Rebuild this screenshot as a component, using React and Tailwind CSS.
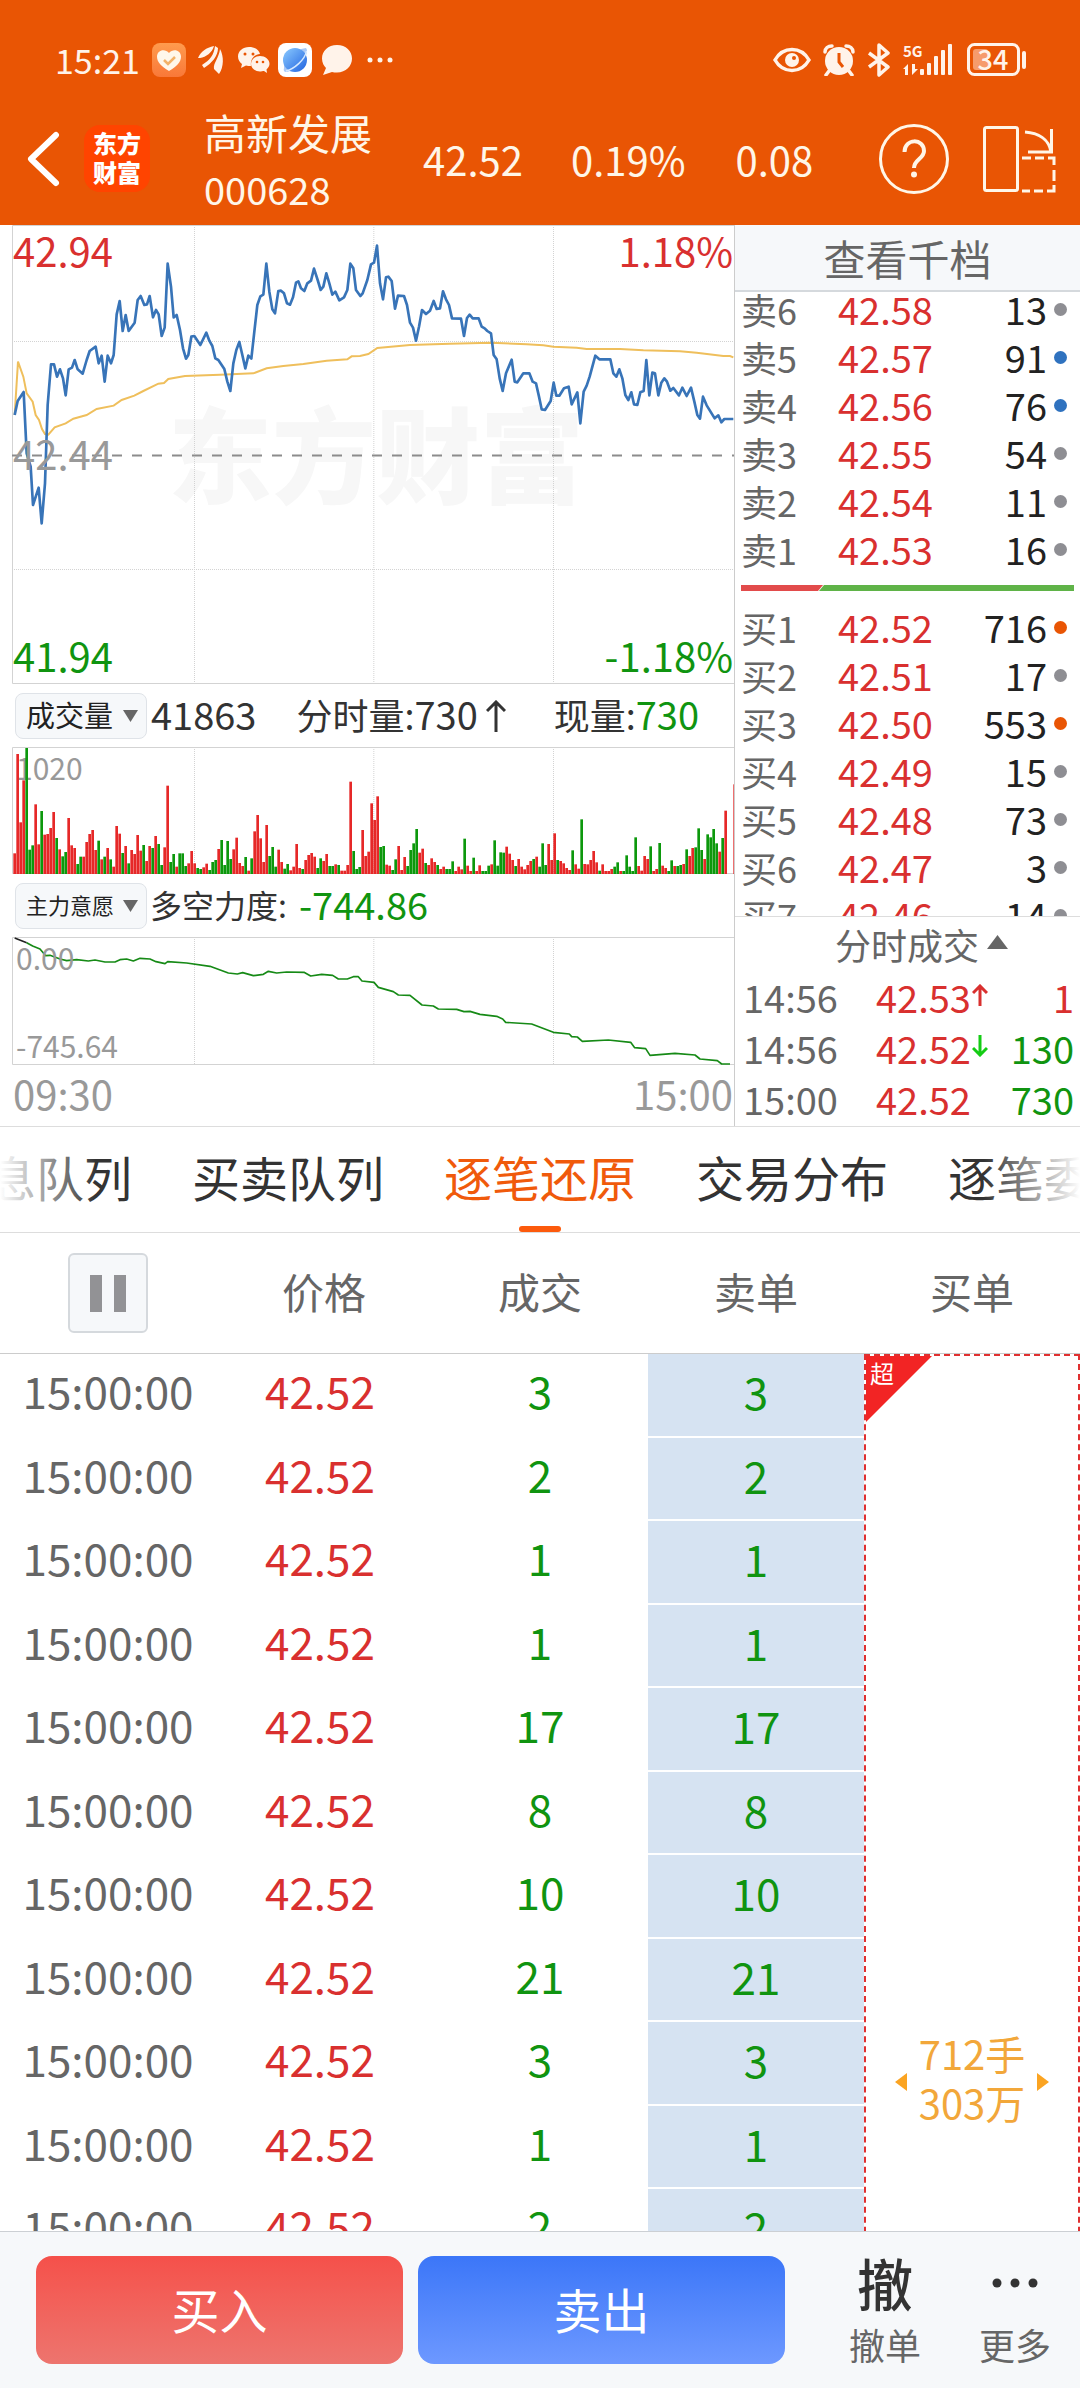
import React, { useState } from 'react'

const pricePoints =
    '44,585 53,543 71,516 80,700 92,740 99,855 116,803 125,910 135,790 143,555 153,433 162,433 171,470 180,448 189,475 197,526 206,448 216,443 224,420 233,448 248,461 260,420 269,393 287,380 296,430 305,407 314,485 323,407 333,430 341,405 350,283 359,243 368,333 377,285 386,333 404,308 413,240 422,228 433,255 441,253 449,228 459,292 468,270 476,283 485,348 494,323 503,131 513,200 521,292 530,285 540,330 549,385 558,416 565,405 574,350 583,348 601,375 619,338 628,362 637,378 646,415 655,420 673,447 682,485 691,513 700,430 709,390 718,366 727,405 736,445 745,407 754,416 763,335 772,255 781,229 790,224 799,131 808,215 817,268 825,280 835,213 843,212 852,220 861,250 870,254 879,232 888,188 895,184 903,205 913,213 922,190 933,182 942,146 953,180 962,210 970,200 979,160 988,190 997,224 1006,215 1018,241 1032,232 1042,210 1051,131 1060,145 1068,210 1081,228 1088,220 1102,180 1113,133 1122,128 1131,77 1140,190 1149,238 1158,172 1165,170 1175,183 1185,266 1194,227 1212,228 1221,255 1230,308 1239,323 1248,362 1257,320 1266,270 1278,282 1290,272 1301,243 1310,267 1320,265 1329,214 1338,238 1347,255 1356,295 1383,296 1392,348 1401,294 1409,284 1418,295 1436,295 1445,320 1454,325 1462,333 1473,340 1481,405 1490,418 1499,475 1508,513 1518,460 1535,419 1544,485 1552,487 1570,460 1588,460 1598,485 1608,490 1617,530 1625,568 1635,570 1652,543 1661,488 1669,527 1678,527 1692,505 1706,500 1715,553 1732,517 1741,610 1751,515 1760,497 1769,470 1786,407 1798,418 1831,418 1840,460 1849,470 1858,448 1867,475 1876,525 1885,540 1894,517 1902,553 1912,555 1921,517 1931,513 1939,420 1948,526 1957,458 1965,460 1975,526 1984,488 1993,475 2001,485 2011,512 2020,504 2037,526 2047,503 2060,528 2073,503 2083,545 2092,585 2100,596 2109,530 2120,556 2144,595 2155,586 2164,607 2173,597 2200,597'

const averagePoints =
    '44,585 54,425 70,470 80,520 98,545 107,585 117,600 126,627 135,642 145,644 164,622 197,610 220,596 260,585 290,567 341,557 365,540 403,527 430,513 475,491 492,489 505,477 555,468 660,464 760,460 800,445 850,438 910,432 980,422 1042,418 1055,409 1080,408 1105,402 1132,384 1230,375 1350,371 1473,368 1580,373 1630,376 1660,380 1730,383 1760,387 1860,387 1930,391 2040,394 2090,398 2170,408 2190,408 2200,412'

const forcePoints =
    '80,818 98,828 120,837 137,857 150,856 180,867 200,872 230,869 265,873 285,870 315,876 345,876 360,869 380,867 400,873 420,865 450,867 468,875 495,881 503,875 560,879 630,889 685,909 712,912 728,908 760,917 790,913 805,904 830,909 860,906 912,907 932,918 965,913 998,916 1015,927 1042,927 1060,920 1075,920 1086,933 1122,937 1135,952 1180,965 1195,975 1230,976 1266,1005 1300,1008 1315,1017 1370,1018 1392,1025 1410,1024 1440,1033 1490,1039 1508,1047 1517,1057 1595,1062 1660,1087 1708,1092 1715,1100 1732,1101 1747,1114 1825,1110 1892,1117 1904,1133 1937,1136 1950,1156 2025,1150 2085,1155 2100,1167 2152,1172 2165,1182 2190,1182'

// one bar a minute, r = up, g = down
const volumes =
    'r62 r360 r155 r281 g378 g73 g86 r209 r89 g189 r118 r120 r138 r186 g108 r74 g53 g66 r168 r86 r78 g30 g52 r52 r96 r120 r132 r72 g100 r44 g52 r78 g44 r22 r144 r121 g63 r84 g32 r72 r60 r117 r70 g87 r39 r84 g78 r114 g90 g27 r80 r265 g36 g60 r22 g62 g62 g24 r32 r69 r32 g18 g15 r20 r31 g12 g36 g42 r75 g102 g27 g99 g45 r74 r109 r33 r24 g51 r10 g47 r128 r177 r107 r36 r147 g54 g81 g22 r73 r36 g16 g30 r11 r22 r90 r18 g15 r42 r57 r63 r52 g18 g47 r39 r60 g24 g24 r29 g27 r10 r10 r27 r277 g69 g15 g21 r132 r54 r67 r212 r162 r233 g81 g84 r28 r25 g12 g44 r84 r12 r51 g24 g72 g92 g135 r64 r76 g33 r27 r47 r36 g27 r15 r22 g15 g15 g38 r9 r22 r14 g106 r25 r9 g49 r9 r26 g9 g9 g25 r29 g101 g25 g65 g64 r82 r61 r42 g24 r45 r22 r14 r27 r39 g45 r52 g22 g92 g27 r90 r42 r122 g42 r39 r32 r18 r12 g71 r29 r16 g164 r30 r29 r42 r69 r35 g10 r29 r9 r9 r15 g22 g35 r9 g9 g56 g22 g9 g110 r24 r10 r54 r45 g83 r9 r15 g93 r25 r18 g9 g41 r24 g24 g27 r30 g74 r54 r78 g80 g137 g72 r45 g119 g110 g135 g92 r67 g108 r190 r0 r0 r269'

const sells = [
    { name: '卖6', price: '42.58', qty: 13, dot: 'bg-[#8e8e93]' },
    { name: '卖5', price: '42.57', qty: 91, dot: 'bg-[#2f72bf]' },
    { name: '卖4', price: '42.56', qty: 76, dot: 'bg-[#2f72bf]' },
    { name: '卖3', price: '42.55', qty: 54, dot: 'bg-[#8e8e93]' },
    { name: '卖2', price: '42.54', qty: 11, dot: 'bg-[#8e8e93]' },
    { name: '卖1', price: '42.53', qty: 16, dot: 'bg-[#8e8e93]' },
]

const buys = [
    { name: '买1', price: '42.52', qty: 716, dot: 'bg-[#e95504]' },
    { name: '买2', price: '42.51', qty: 17, dot: 'bg-[#8e8e93]' },
    { name: '买3', price: '42.50', qty: 553, dot: 'bg-[#e95504]' },
    { name: '买4', price: '42.49', qty: 15, dot: 'bg-[#8e8e93]' },
    { name: '买5', price: '42.48', qty: 73, dot: 'bg-[#8e8e93]' },
    { name: '买6', price: '42.47', qty: 3, dot: 'bg-[#8e8e93]' },
    { name: '买7', price: '42.46', qty: 14, dot: 'bg-[#8e8e93]' },
]

const ticks = [
    { time: '14:56', price: '42.53', dir: 'up', qty: 1, color: 'text-[#d9302f]' },
    { time: '14:56', price: '42.52', dir: 'down', qty: 130, color: 'text-[#109410]' },
    { time: '15:00', price: '42.52', dir: '', qty: 730, color: 'text-[#109410]' },
]

const deals = [3, 2, 1, 1, 17, 8, 10, 21, 3, 1, 2]

const tabs = ['买卖队列', '逐笔还原', '交易分布']

function StatusBar() {
    return (
        <div className="flex items-center justify-between h-[120px] pl-[55px] pr-[52px] text-[#fff3ea]">
            <div className="flex items-center">
                <span className="text-[34px] leading-[40px] mr-3">15:21</span>
                <svg className="w-[34px] h-[34px] mr-3" viewBox="0 0 34 34">
                    <defs>
                        <linearGradient id="heart" x1="0" y1="0" x2="0" y2="1">
                            <stop offset="0" stopColor="#ff9b4e" />
                            <stop offset="1" stopColor="#f97838" />
                        </linearGradient>
                    </defs>
                    <rect width="34" height="34" rx="8" fill="url(#heart)" />
                    <path d="M17 28C9 23 5 19 5 13.500C5 7 13 5 17 10C21 5 29 7 29 13.500C29 19 25 23 17 28Z" fill="#fff7ea" />
                    <path d="M12 17l4 4 7-7" fill="none" stroke="#f3b268" strokeWidth="2.500" />
                </svg>
                <svg className="w-[26px] h-[30px] mr-[14px]" viewBox="0 0 26 30" fill="currentColor">
                    <path d="M0 13C3 6 8 3 16 1C14 8 8 12 2 13Z" />
                    <path d="M4 20C12 15 16 10 17 1L20 3C20 11 14 18 6 23Z" />
                    <path d="M16 24C15 18 21 13 22 4C26 11 26 22 21 29Z" />
                </svg>
                <svg className="w-[32px] h-[28px] mr-2" viewBox="0 0 32 28">
                    <path d="M11 1C5 1 0 5 0 10.500C0 14 2 16.500 4 18L3 22L8 19.500C9 20 12 20 13 20C12 13 17 8 22 8C21 4 17 1 11 1Z" fill="currentColor" />
                    <path d="M22 10C17 10 13 13.500 13 18C13 22 17 25.500 22 25.500C23 25.500 25 25 26 25L29 27L28.500 23.500C30 22 31.500 20 31.500 18C31.500 13.500 27 10 22 10Z" fill="currentColor" />
                    <g fill="#e95504">
                        <circle cx="7" cy="8" r="1.500" />
                        <circle cx="15" cy="8" r="1.500" />
                        <circle cx="19" cy="16" r="1.300" />
                        <circle cx="25" cy="16" r="1.300" />
                    </g>
                </svg>
                <svg className="w-[34px] h-[34px] mr-2" viewBox="0 0 34 34">
                    <defs>
                        <linearGradient id="globe" x1="0" y1="0" x2="1" y2="1">
                            <stop offset="0" stopColor="#8ccbff" />
                            <stop offset="1" stopColor="#1f62e0" />
                        </linearGradient>
                    </defs>
                    <rect width="34" height="34" rx="8" fill="#fff" />
                    <path d="M6 25C4 32 13 29 20 23C27 17 31 8 28 5L23 6L6 22Z" fill="#a9c9f7" />
                    <circle cx="17" cy="17" r="12" fill="url(#globe)" />
                    <path d="M8 28C16 26 27 17 28.500 8" fill="none" stroke="#d7eaff" strokeWidth="1.500" />
                </svg>
                <svg className="w-[34px] h-[32px] mr-[13px]" viewBox="0 0 34 32" fill="currentColor">
                    <path d="M17 1C8 1 2 7 2 14.500C2 19 4 22 6 24L3 31L12 28C13.500 28.500 15 28.500 17 28.500C26 28.500 32 22 32 14.500C32 7 26 1 17 1Z" />
                </svg>
                <svg className="w-[26px] h-2" viewBox="0 0 26 8" fill="currentColor">
                    <circle cx="3" cy="4" r="2.500" />
                    <circle cx="13" cy="4" r="2.500" />
                    <circle cx="23" cy="4" r="2.500" />
                </svg>
            </div>
            <div className="flex items-center gap-3">
                <svg className="w-[38px] h-[26px]" viewBox="0 0 38 26">
                    <path d="M2 13C10 -1 28 -1 36 13C28 27 10 27 2 13Z" fill="none" stroke="currentColor" strokeWidth="3.500" />
                    <circle cx="19" cy="13" r="7" fill="currentColor" />
                    <circle cx="21" cy="11" r="2" fill="#e95504" />
                </svg>
                <svg className="w-[32px] h-[32px]" viewBox="0 0 32 32">
                    <circle cx="16" cy="17" r="14" fill="currentColor" />
                    <path d="M2 8C2 4 5 2 9 2M23 2C27 2 30 4 30 8" fill="none" stroke="currentColor" strokeWidth="3.500" strokeLinecap="round" />
                    <path d="M6 27l-3 4M26 27l3 4" stroke="currentColor" strokeWidth="3.500" strokeLinecap="round" />
                    <path d="M16 9v9l4 5" fill="none" stroke="#e95504" strokeWidth="3" />
                </svg>
                <svg className="w-[24px] h-[34px]" viewBox="0 0 24 34" fill="none" stroke="currentColor" strokeWidth="3.500" strokeLinejoin="round">
                    <path d="M2 10L21 24L12 32V2L21 10L2 24" />
                </svg>
                <svg className="w-[52px] h-[34px]" viewBox="0 0 52 34" fill="currentColor">
                    <text x="0" y="14" fontSize="15" fontWeight="700">5G</text>
                    <path d="M0 26l5-5v11h-3v-6zM9 21v11l6-6h-3v-5z" />
                    <rect x="17" y="26" width="4" height="6" rx="1" />
                    <rect x="24" y="20" width="4" height="12" rx="1" />
                    <rect x="31" y="13" width="4" height="19" rx="1" />
                    <rect x="38" y="7" width="4" height="25" rx="1" />
                    <rect x="45" y="1" width="4" height="31" rx="1" />
                </svg>
                <svg className="w-[61px] h-[34px]" viewBox="0 0 61 34" fill="currentColor">
                    <rect x="1.500" y="1.500" width="50" height="30" rx="6" fill="none" stroke="currentColor" strokeWidth="3" />
                    <rect x="6" y="6" width="15" height="21" rx="3" fill="#f69b6c" />
                    <rect x="55" y="8" width="4" height="18" rx="2" />
                    <text x="26" y="27" fontSize="27" fontWeight="500" textAnchor="middle">34</text>
                </svg>
            </div>
        </div>
    )
}

function Header() {
    return (
        <header className="bg-[#e95504] text-[#fff6e8]">
            <StatusBar />
            <div className="flex items-center h-[105px] pl-[26px] pr-[24px] pb-[28px]">
                <button aria-label="返回">
                    <svg className="w-[34px] h-[56px]" viewBox="0 0 34 56" fill="none" stroke="#fff" strokeWidth="6" strokeLinejoin="round" strokeLinecap="round">
                        <path d="M30 4L5 28L30 52" />
                    </svg>
                </button>
                <div className="ml-6 flex h-[67px] w-[66px] flex-col items-center justify-center rounded-2xl bg-[#ff4400] pb-1 text-[24px] leading-[29px] font-black text-white">
                    <span>东方</span>
                    <span>财富</span>
                </div>
                <div className="ml-[54px] whitespace-nowrap">
                    <p className="text-[42px] leading-[60px]">高新发展</p>
                    <p className="text-[38px] leading-[54px]">000628</p>
                </div>
                <div className="ml-[51px] flex flex-1 text-[40px] leading-[60px]">
                    <span>42.52</span>
                    <span className="ml-[48px]">0.19%</span>
                    <span className="ml-[50px]">0.08</span>
                </div>
                <button aria-label="帮助" className="mr-[33px]">
                    <svg className="w-[70px] h-[70px]" viewBox="0 0 70 70" fill="none" stroke="currentColor">
                        <circle cx="35" cy="35" r="33.500" strokeWidth="3" />
                        <path d="M25.500 28C25.500 14 45 14 45 27C45 35 35 35 35 44" strokeWidth="4" />
                        <circle cx="35" cy="50.500" r="3" fill="currentColor" stroke="none" />
                    </svg>
                </button>
                <button aria-label="横屏">
                    <svg className="w-[74px] h-[68px]" viewBox="0 0 74 68" fill="none" stroke="currentColor" strokeWidth="3">
                        <rect x="2.500" y="2.500" width="33" height="63" rx="2" />
                        <path d="M43 7C56 8 67 14 69 27M69.500 4V27H46" />
                        <path d="M40 33h9M53 33h9M66 33h6v7M72 45v11M72 60v6h-7M61 66h-9M48 66h-8" />
                    </svg>
                </button>
            </div>
        </header>
    )
}

// y and height are in the chart's own units, three to a pixel
function Grid({ y, height }) {
    return (
        <g fill="none" stroke="#d3d3d3" strokeWidth="3">
            <path d={`M583.500 ${y}v${height}M1121.500 ${y}v${height}M1660.500 ${y}v${height}`} strokeDasharray="3 3" />
            <path d={`M2202 ${y + 1.5}H37.500V${y + height - 1.5}H2202`} />
        </g>
    )
}

function PriceChart() {
    return (
        <div className="relative text-[40px] leading-[50px]">
            <p className="absolute inset-y-0 left-[156px] flex items-center pb-2 text-[104px] font-black text-[#f7f7f7]">东方财富</p>
            <svg className="relative block w-full h-auto" viewBox="36 15 2166 1377" fill="none">
                <Grid y={15} height={1377} />
                <path d="M36 364.500H2202M36 1048.500H2202" stroke="#d3d3d3" strokeWidth="3" strokeDasharray="3 3" />
                <path d="M36 706.500H2202" stroke="#8c8c8c" strokeWidth="6" strokeDasharray="30 30" />
                <polyline points={averagePoints} stroke="#efbf5c" strokeWidth="6" />
                <polyline points={pricePoints} stroke="#3874b8" strokeWidth="8" strokeLinejoin="round" />
            </svg>
            <span className="absolute left-px top-0 text-[#d9302f]">42.94</span>
            <span className="absolute right-px top-0 text-[#d9302f]">1.18%</span>
            <span className="absolute left-px inset-y-0 flex items-center pb-1 text-[#999]">42.44</span>
            <span className="absolute left-px bottom-1 text-[#109410]">41.94</span>
            <span className="absolute right-px bottom-1 text-[#109410]">-1.18%</span>
        </div>
    )
}

function VolumeChart() {
    return (
        <div className="relative text-[30px] leading-[40px]">
            <span className="absolute left-1 top-0 text-[#999]">1020</span>
            <svg className="relative block w-full h-auto" viewBox="36 231 2166 381">
                <Grid y={231} height={381} />
                {volumes.split(' ').map((v, i) => {
                    const h = Number(v.slice(1))
                    return <rect key={i} x={40 + i * 9} y={612 - h} width="8" height={h} fill={v[0] === 'r' ? '#e62828' : '#0c980c'} />
                })}
            </svg>
        </div>
    )
}

function ForceChart() {
    return (
        <div className="relative text-[30px] leading-[40px] text-[#999]">
            <svg className="block w-full h-auto" viewBox="36 801 2166 384" fill="none">
                <Grid y={801} height={384} />
                <polyline points="44,804 80,818" stroke="#222" strokeWidth="5" />
                <polyline points={forcePoints} stroke="#168a16" strokeWidth="5" strokeLinejoin="round" />
            </svg>
            <span className="absolute left-1 top-0">0.00</span>
            <span className="absolute left-1 bottom-0">-745.64</span>
        </div>
    )
}

function Indicator({ label, options, className }) {
    return (
        <div className="relative ml-[3px] w-[132px]">
            <select aria-label={label} className={`block h-[46px] w-full appearance-none rounded-lg border border-[#dfe3e8] bg-[#f6f8fa] pb-1 pl-[10px] leading-[40px] text-[#222] ${className}`}>
                {options.map((o) => <option key={o}>{o}</option>)}
            </select>
            <svg className="pointer-events-none absolute right-[9px] top-[17px] w-[15px] h-3" viewBox="0 0 15 12" fill="#666">
                <path d="M0 0H15L7.500 12Z" />
            </svg>
        </div>
    )
}

function LeftPanel() {
    return (
        <div className="border-r border-[#ccc] pl-3">
            <PriceChart />
            <div className="flex items-center h-[63px] text-[38px] leading-[54px] text-[#333]">
                <Indicator label="副图指标一" options={['成交量']} className="text-[29px]" />
                <span className="ml-1 pb-1">41863</span>
                <span className="ml-[40px] pb-1"><span className="text-[36px]">分时量:</span>730</span>
                <svg className="ml-2 w-[20px] h-[32px]" viewBox="0 0 20 32" fill="none" stroke="currentColor" strokeWidth="3">
                    <path d="M10 32V2M1 11L10 2L19 11" />
                </svg>
                <span className="ml-[48px] pb-1"><span className="text-[36px]">现量:</span><span className="text-[#109410]">730</span></span>
            </div>
            <VolumeChart />
            <div className="flex items-center h-[63px] text-[38px] leading-[54px] text-[#333]">
                <Indicator label="副图指标二" options={['主力意愿']} className="text-[22px]" />
                <span className="ml-[3px] pb-1 text-[32px]">多空力度:</span>
                <span className="ml-3 pb-1 text-[#109410]">-744.86</span>
            </div>
            <ForceChart />
            <div className="flex justify-between h-[61px] pl-px pr-px text-[40px] leading-[56px] text-[#999]">
                <span>09:30</span>
                <span>15:00</span>
            </div>
        </div>
    )
}

function BookRow({ row }) {
    return (
        <li className="flex items-center h-12 pl-[6px] pr-[13px] text-[38px] leading-[48px]">
            <span className="w-[97px] text-[36px] text-[#666]">{row.name}</span>
            <span className="text-[#d9302f]">{row.price}</span>
            <span className="flex-1 text-right text-[#222]">{row.qty}</span>
            <i className={`ml-[7px] w-[13px] h-[13px] rounded-full ${row.dot}`}></i>
        </li>
    )
}

function Arrow({ dir }) {
    if (!dir) return null
    return (
        <svg className={dir === 'up' ? 'ml-px mb-1 w-4 h-[22px]' : 'ml-px mb-1 w-4 h-[22px] rotate-180'} viewBox="0 0 16 22" fill="none" stroke={dir === 'up' ? '#d9302f' : '#14cc14'} strokeWidth="3">
            <path d="M8 22V2M1 9L8 2L15 9" />
        </svg>
    )
}

function RightPanel() {
    return (
        <div className="flex flex-col min-h-0">
            <button className="h-[67px] shrink-0 border-b-2 border-[#d5d9dd] bg-[#f6f8fa] text-[42px] leading-[60px] text-[#666]">查看千档</button>
            <div className="h-0 grow overflow-hidden">
                <ul className="-mt-[7px]">
                    {sells.map((row) => <BookRow key={row.name} row={row} />)}
                </ul>
                <svg className="block w-full h-auto py-3 pl-[6px] pr-[6px]" viewBox="0 0 333 6">
                    <path d="M0 0H82L77 6H0Z" fill="#e24b4b" />
                    <path d="M83 0H333V6H78Z" fill="#5fb348" />
                </svg>
                <ul>
                    {buys.map((row) => <BookRow key={row.name} row={row} />)}
                </ul>
            </div>
            <div className="shrink-0 border-t border-[#ddd] pb-[2px]">
                <button className="flex h-[54px] w-full items-center justify-center pl-7 text-[36px] leading-[54px] text-[#666]">
                    分时成交
                    <svg className="ml-2 mb-1 w-[21px] h-[14px]" viewBox="0 0 21 14" fill="#666">
                        <path d="M10.500 0L21 14H0Z" />
                    </svg>
                </button>
                {ticks.map((t, i) => (
                    <div key={i} className="flex items-center h-[51px] pl-2 pr-[6px] text-[38px] leading-[51px]">
                        <span className="w-[133px] text-[#666]">{t.time}</span>
                        <span className="text-[#d9302f]">{t.price}</span>
                        <Arrow dir={t.dir} />
                        <span className={`flex-1 text-right ${t.color}`}>{t.qty}</span>
                    </div>
                ))}
            </div>
        </div>
    )
}

function Tabs() {
    const [active, setActive] = useState('逐笔还原')

    return (
        <nav className="relative flex justify-center gap-[60px] h-[106px] overflow-hidden border-b border-[#ddd] text-[48px] leading-[60px] text-[#333]">
            <button className="w-48 shrink-0 pb-2 text-right">息队列</button>
            {tabs.map((tab) => (
                <button
                    key={tab}
                    onClick={() => setActive(tab)}
                    className={tab === active ? 'relative w-48 shrink-0 pb-2 text-[#f05a0b]' : 'relative w-48 shrink-0 pb-2'}
                >
                    {tab}
                    {tab === active && <i className="absolute bottom-0 left-[75px] w-[42px] h-[6px] rounded-sm bg-[#fc5a0c]"></i>}
                </button>
            ))}
            <button className="w-48 shrink-0 pb-2 text-left">逐笔委</button>
            <div className="pointer-events-none absolute inset-y-0 left-0 w-24 bg-linear-to-r from-white to-transparent"></div>
            <div className="pointer-events-none absolute inset-y-0 right-0 w-24 bg-linear-to-l from-white to-transparent"></div>
        </nav>
    )
}

function DealTable() {
    return (
        <div className="flex-1 min-h-0 overflow-hidden">
            <table className="w-full table-fixed border-separate border-spacing-0 text-center text-[44px] leading-[60px]">
                <thead>
                    <tr className="h-[121px] text-[42px] text-[#666]">
                        <th className="border-b border-[#ccc] p-0">
                            <button aria-label="暂停" className="inline-flex w-[80px] h-[80px] items-center justify-center gap-3 rounded-md border-2 border-[#d5d9dd] bg-[#f6f8fa] align-middle">
                                <i className="w-3 h-[37px] bg-[#929295]"></i>
                                <i className="w-3 h-[37px] bg-[#929295]"></i>
                            </button>
                        </th>
                        <th className="border-b border-[#ccc] p-0 pb-1 font-normal">价格</th>
                        <th className="border-b border-[#ccc] p-0 pb-1 font-normal">成交</th>
                        <th className="border-b border-[#ccc] p-0 pb-1 font-normal">卖单</th>
                        <th className="border-b border-[#ccc] p-0 pb-1 font-normal">买单</th>
                    </tr>
                </thead>
                <tbody>
                    {deals.map((n, i) => (
                        <tr key={i} className="odd:h-[84px] even:h-[83px]">
                            <td className="p-0 pb-3 text-[#666]">15:00:00</td>
                            <td className="p-0 pb-3 pr-2 text-[#d9302f]">42.52</td>
                            <td className="p-0 pb-3 text-[#109410]">{n}</td>
                            <td className="border-b-2 border-white bg-[#d6e3f2] p-0 pb-2 text-[#109410]">{n}</td>
                            {i === 0 && (
                                <td rowSpan={deals.length} className="relative border-2 border-dashed border-[#e03030] p-0 pb-[144px] align-bottom text-[40px] leading-[49px] text-[#f2a73a]">
                                    <svg className="absolute left-0 top-0 w-[66px] h-[66px]" viewBox="0 0 66 66">
                                        <path d="M0 0H66L0 66Z" fill="#f22424" />
                                    </svg>
                                    <span className="absolute left-1 top-0 text-[24px] leading-[34px] text-white">超</span>
                                    <div className="flex items-center justify-center gap-3">
                                        <svg className="mt-2 w-3 h-[18px]" viewBox="0 0 12 18" fill="#fba422"><path d="M12 0V18L0 9Z" /></svg>
                                        <p>712手<br />303万</p>
                                        <svg className="mt-2 w-3 h-[18px]" viewBox="0 0 12 18" fill="#fba422"><path d="M0 0V18L12 9Z" /></svg>
                                    </div>
                                </td>
                            )}
                        </tr>
                    ))}
                </tbody>
            </table>
        </div>
    )
}

function BottomBar() {
    return (
        <footer className="flex shrink-0 items-start h-[157px] border-t border-[#ccd0d4] bg-[#f6f8fa] pt-6 pl-9 text-[48px] text-white">
            <button className="flex-1 h-[108px] rounded-2xl bg-linear-to-b from-[#f5504a] to-[#ed746e] pb-1">买入</button>
            <button className="ml-[15px] flex-1 h-[108px] rounded-2xl bg-linear-to-b from-[#3b76f8] to-[#6d98ff] pb-1">卖出</button>
            <button className="ml-[35px] flex w-[130px] flex-col items-center text-[#333]">
                <span className="text-[56px] leading-[52px] font-medium">撤</span>
                <span className="mt-4 text-[36px] leading-[40px] text-[#666]">撤单</span>
            </button>
            <button className="flex w-[130px] flex-col items-center text-[#333]">
                <svg className="w-[46px] h-[52px]" viewBox="0 0 46 52" fill="currentColor">
                    <circle cx="5" cy="27" r="4.500" />
                    <circle cx="23" cy="27" r="4.500" />
                    <circle cx="41" cy="27" r="4.500" />
                </svg>
                <span className="mt-4 text-[36px] leading-[40px] text-[#666]">更多</span>
            </button>
        </footer>
    )
}

export default function App() {
    return (
        <div className="flex h-screen flex-col overflow-hidden bg-white [font-family:'Noto_Sans_CJK_SC','Noto_Sans',sans-serif]">
            <Header />
            <section className="grid shrink-0 grid-cols-[735fr_345fr] border-b border-[#ddd]">
                <LeftPanel />
                <RightPanel />
            </section>
            <Tabs />
            <DealTable />
            <BottomBar />
        </div>
    )
}
